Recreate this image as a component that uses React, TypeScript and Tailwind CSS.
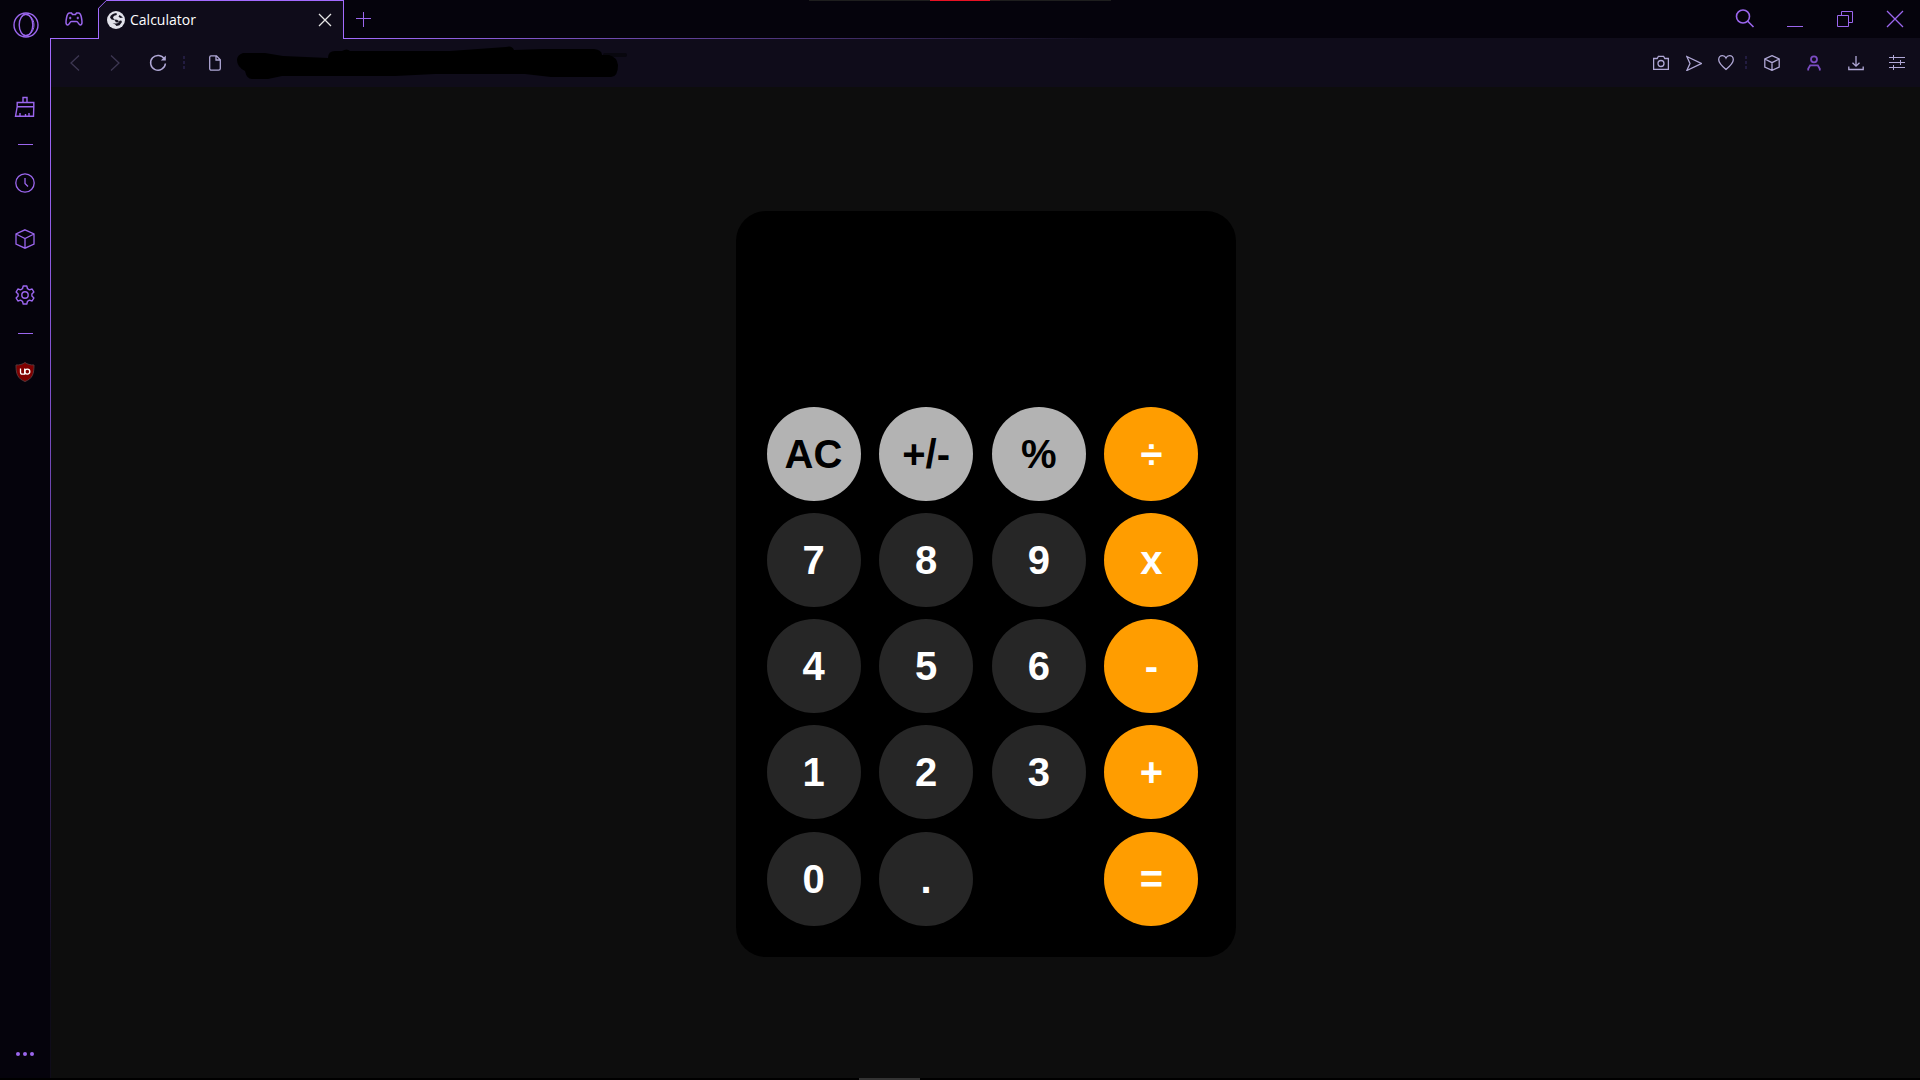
import React from "react";

type IconProps = { children: React.ReactNode; w?: number; h?: number; className?: string; sw?: number };

function Glyph({ children, w = 20, h = 20, className = "", sw = 1.3 }: IconProps) {
  return (
    <svg
      width={w}
      height={h}
      viewBox={`0 0 ${w} ${h}`}
      fill="none"
      stroke="currentColor"
      strokeWidth={sw}
      className={"shrink-0 " + className}
      aria-hidden="true"
    >
      {children}
    </svg>
  );
}

function Cube({ size }: { size: number }) {
  return (
    <svg width={size} height={size} viewBox="0 0 20 20" fill="none" stroke="currentColor" strokeWidth={size < 20 ? 1.6 : 1.3} aria-hidden="true">
      <path d="M10 .8 19 5v10l-9 4.200L1 15V5zM1 5l9 4.600L19 5M10 9.600v9.600" />
    </svg>
  );
}

function IconButton({ label, className, children }: { label: string; className: string; children: React.ReactNode }) {
  return (
    <button type="button" aria-label={label} className={"flex shrink-0 items-center justify-center " + className}>
      {children}
    </button>
  );
}

function Sidebar() {
  return (
    <aside className="flex w-[50px] shrink-0 flex-col items-center bg-[#05030c] text-[#9b66ee]">
      <IconButton label="Opera menu" className="mt-3 h-[26px] w-full pl-px">
        <Glyph w={26} h={26} sw={1.4}>
          <circle cx="13" cy="13" r="12" />
          <ellipse cx="13" cy="13" rx="6.800" ry="10.800" />
          <path d="M10.500 2.800C16 1.500 21 6 21 13s-5 11.500-10.500 10.200" strokeWidth="1" />
        </Glyph>
      </IconButton>
      <IconButton label="Cleaner" className="mt-[58px] h-[22px] w-full">
        <Glyph w={22} h={22} sw={1.4}>
          <path d="M9 6V1.500h4V6M3.200 6.500h16.600v4.200H3.200zM3.200 10.700 1.500 20.300h18l.3-9.600M6 20v-3M11.500 20v-2M15 20v-3" />
        </Glyph>
      </IconButton>
      <hr className="mt-[26px] w-[15px] border-[#9b66ee]" />
      <IconButton label="History" className="mt-7 h-5 w-full">
        <Glyph>
          <circle cx="10" cy="10" r="9.200" />
          <path d="M10 5v5.500l3 3" />
        </Glyph>
      </IconButton>
      <IconButton label="Extensions" className="mt-9 h-5 w-full">
        <Cube size={20} />
      </IconButton>
      <IconButton label="Settings" className="mt-9 h-5 w-full">
        <Glyph sw={1.4}>
          <circle cx="10" cy="10" r="3.200" />
          <path d="M8.200 1h3.600l.7 2.700 1.900 1.100 2.700-.8 1.800 3.100-2 1.900v2l2 1.900-1.800 3.100-2.700-.8-1.900 1.100-.7 2.700H8.200l-.7-2.700-1.900-1.100-2.700.8-1.800-3.100 2-1.900V9l-2-1.900L2.900 4l2.700.8 1.900-1.100z" strokeLinejoin="round" />
        </Glyph>
      </IconButton>
      <hr className="mt-7 w-[15px] border-[#9b66ee]" />
      <IconButton label="uBlock Origin" className="mt-7 h-5 w-full">
        <Glyph>
          <path d="M10 .5c2.500 2 5.500 2.500 9 2.500 0 9-1.500 13.500-9 16.500C2.500 16.500 1 12 1 3c3.500 0 6.500-.5 9-2.500z" fill="#800000" stroke="#55373a" strokeWidth="1" />
          <path d="M5.500 6.500v3.800c0 1.200.6 1.900 1.800 1.900h2.400V6.500" stroke="#fff" strokeWidth="1.300" />
          <circle cx="12.300" cy="9.600" r="2.500" stroke="#fff" strokeWidth="1.300" />
        </Glyph>
      </IconButton>
      <IconButton label="More" className="mt-auto mb-4 h-5 w-full">
        <Glyph>
          <g fill="currentColor" stroke="none">
            <circle cx="3" cy="10" r="2" />
            <circle cx="10" cy="10" r="2" />
            <circle cx="17" cy="10" r="2" />
          </g>
        </Glyph>
      </IconButton>
    </aside>
  );
}

function TabStrip() {
  return (
    <header className="flex h-[39px] shrink-0 bg-[#05030c] text-[#9b66ee]">
      <div className="flex w-12 shrink-0 border-b border-[#a36bff]">
        <IconButton label="GX Corner" className="h-[38px] w-full">
          <Glyph w={18} h={14} sw={1.500}>
            <path d="M4.500 1h2l1 1.500h3L11.500 1h2c1.800 0 2.300 1.500 2.900 4.500.7 3.500 1.200 7.500-1 7.500-1.800 0-2-3.500-4-3.500H6.600c-2 0-2.200 3.500-4 3.500-2.200 0-1.700-4-1-7.500C2.200 2.500 2.700 1 4.500 1z" />
            <path d="M4 6h2.400M5.200 4.800v2.400M11.600 6H14M12.800 4.800v2.400" strokeWidth="1.200" />
          </Glyph>
        </IconButton>
      </div>
      <div className="relative flex w-[246px] shrink-0 items-center border-x border-t border-[#a36bff] bg-[#0f0c1a] px-2">
        <svg width="9" height="9" viewBox="0 0 9 9" className="absolute -top-px -left-px" aria-hidden="true">
          <path d="M0 0h9L0 9z" fill="#05030c" />
          <path d="M.5 9V8.300L8.300.5H9" fill="none" stroke="#a36bff" />
        </svg>
        <svg width="18" height="18" viewBox="0 0 18 18" aria-hidden="true" className="shrink-0">
          <circle cx="9" cy="9" r="9" fill="#e2e2ea" />
          <path d="M9.500 2C6 2.200 3.500 4 3 6.500l1.500 2 3.300.7 1 2 2.600.3.400-1.500-1.800-1.200-3-.4L6 6.200l1.200-1.500 2.600-.6zM12.500 4l-1 1.800 2 1.200 2.500-.4M5.500 12.500l2.500.8 1.500 1.700 3-.8 2.500-3.200-.8-1.600-1.700.4-1.200 2.200-2.300.6z" fill="#15121f" />
        </svg>
        <span className="ml-[5px] font-['Open_Sans','Noto_Sans',sans-serif] text-sm leading-5 text-white">Calculator</span>
        <IconButton label="Close tab" className="ml-auto h-5 w-5 text-[#e6e6e6]">
          <Glyph w={14} h={14} sw={1.300}>
            <path d="m1 1 12 12M13 1 1 13" />
          </Glyph>
        </IconButton>
      </div>
      <div className="flex min-w-0 flex-1 flex-col">
        <div className="flex h-[38px] items-center">
          <IconButton label="New tab" className="ml-[7px] h-8 w-6">
            <Glyph w={16} h={16} sw={1}>
              <path d="M8.500 1v15M1 7.500h15" />
            </Glyph>
          </IconButton>
          <div className="ml-auto flex items-center gap-8 pr-4">
            <IconButton label="Search tabs" className="h-9 w-[18px]">
              <Glyph w={20} h={20} sw={1.600}>
                <circle cx="8" cy="7.500" r="6.500" />
                <path d="m12.500 12 6 6" />
              </Glyph>
            </IconButton>
            <IconButton label="Minimize" className="h-9 w-[18px]">
              <Glyph w={16} h={16} sw={1}>
                <path d="M0 15.500h16" />
              </Glyph>
            </IconButton>
            <IconButton label="Restore" className="h-9 w-[18px]">
              <Glyph w={16} h={16} sw={1}>
                <path d="M.5 4.500h11v11H.5zM4.500 4.500v-4h11v11h-4" />
              </Glyph>
            </IconButton>
            <IconButton label="Close window" className="h-9 w-[18px]">
              <Glyph w={18} h={18} sw={1.300}>
                <path d="m1 1 16 16M17 1 1 17" />
              </Glyph>
            </IconButton>
          </div>
        </div>
        <div className="h-px bg-[linear-gradient(to_right,#a36bff,#0f0c1a_48%)]" />
      </div>
    </header>
  );
}

function Divider() {
  return (
    <Glyph w={2} h={14} className="text-[#221c40]">
      <path d="M1 0v3M1 5v3M1 10v3" strokeWidth="2" />
    </Glyph>
  );
}

function Toolbar() {
  return (
    <nav className="flex h-12 shrink-0 items-center bg-[#0f0c1a] text-[#b0a8d6]">
      <IconButton label="Back" className="ml-3 h-8 w-6 text-[#3d3752]">
        <Glyph w={10} h={16}>
          <path d="M9 .5 1 8l8 7.500" />
        </Glyph>
      </IconButton>
      <IconButton label="Forward" className="ml-4 h-8 w-6 text-[#3d3752]">
        <Glyph w={10} h={16}>
          <path d="m1 .5 8 7.500-8 7.500" />
        </Glyph>
      </IconButton>
      <IconButton label="Reload" className="mr-[13px] ml-[19px] h-8 w-6">
        <Glyph w={18} h={18} sw={1.500}>
          <path d="M15.500 5.200A7.400 7.400 0 1 0 16.400 9.500" />
          <path d="M16.800 1.500v5h-5z" fill="currentColor" stroke="none" />
        </Glyph>
      </IconButton>
      <Divider />
      <IconButton label="Page information" className="ml-[18px] h-8 w-6">
        <Glyph w={12} h={16} sw={1.300}>
          <path d="M2 .8h5.500l3.800 4v8.700c0 1-.7 1.700-1.700 1.700H2.400C1.400 15.200.7 14.500.7 13.500V2.300C.7 1.300 1.200.8 2 .8zM7 .8V5h4" />
        </Glyph>
      </IconButton>
      <svg width="396" height="34" viewBox="0 0 396 34" className="ml-2 shrink-0" aria-hidden="true">
        <path d="M370 9h20" stroke="#08070e" strokeWidth="4" strokeLinecap="round" />
        <path d="M8 7h22l18 3 45 2q0-7 7-7h7q5-3 8 0h100l56-4q6-2 8 3l30-1h50q8 1 8 6h7q8 2 9 10 0 12-7 12h-60l-26-3h-90l-40 2H47l-14 3H18q-6 1-8-8-8-4-8-11 0-5 6-7z" fill="#000" />
      </svg>
      <div className="ml-auto flex items-center pr-3.5">
        <IconButton label="Snapshot" className="h-8 w-4">
          <Glyph w={16} h={16}>
            <path d="M.6 3.500h3.600L5.400 1.300h5.200l1.200 2.200h3.600v10.900H.6z" />
            <circle cx="8" cy="8.500" r="3" />
          </Glyph>
        </IconButton>
        <IconButton label="My Flow" className="ml-[17px] h-8 w-4">
          <Glyph w={16} h={16}>
            <path d="M.8 1.500 15.300 8.500.8 15.500 4 8.500z" />
          </Glyph>
        </IconButton>
        <IconButton label="Bookmark" className="mr-[11px] ml-4 h-8 w-4">
          <Glyph w={16} h={16}>
            <path d="M8 14.500C4.500 11.500.7 8 .7 4.700.7 2.300 2.300.7 4.400.7 6 .7 7.300 1.500 8 3.100 8.700 1.500 10 .7 11.600.7c2.100 0 3.700 1.600 3.700 4C15.300 8 11.500 11.500 8 14.500z" />
          </Glyph>
        </IconButton>
        <Divider />
        <IconButton label="Extensions" className="ml-4 h-8 w-[18px]">
          <Cube size={16} />
        </IconButton>
        <IconButton label="Profile" className="ml-6 h-8 w-[18px] text-[#7b4cc2]">
          <Glyph w={14} h={16} sw={1.800}>
            <circle cx="7" cy="4.300" r="3" />
            <path d="M1.200 15.500v-1.700l2-3.500h7.600l2 3.500v1.700" />
          </Glyph>
        </IconButton>
        <IconButton label="Downloads" className="ml-6 h-8 w-[18px]">
          <Glyph w={16} h={16}>
            <path d="M8 1v10M4.500 7.700 8 11.200l3.500-3.500M.8 11.500v3h14.400v-3" />
          </Glyph>
        </IconButton>
        <IconButton label="Easy setup" className="ml-[23px] h-8 w-[18px]">
          <Glyph w={16} h={16} sw={1}>
            <path d="M0 2.500h16M0 7.500h16M0 12.500h16M4.500 0v5M11.500 5v5M4.500 10v5" />
          </Glyph>
        </IconButton>
      </div>
    </nav>
  );
}

const rows: string[][] = [
  ["AC", "+/-", "%", "÷"],
  ["7", "8", "9", "x"],
  ["4", "5", "6", "-"],
  ["1", "2", "3", "+"],
  ["0", ".", "", "="],
];

function keyColor(row: number, col: number) {
  if (col === 3) return "bg-[#ff9d00] text-white";
  if (row === 0) return "bg-[#b3b3b3] text-black";
  return "bg-[#262626] text-white";
}

function Calculator() {
  return (
    <section aria-label="Calculator" className="w-[500px] rounded-[30px] bg-black pt-[31px] pr-[37px] pb-[31px] pl-[31px]">
      <output className="block h-[165px]" />
      <div className="grid min-h-[519px] grid-cols-[repeat(4,94px)] content-between justify-between">
        {rows.map((row, r) =>
          row.map((key, c) =>
            key === "" ? (
              <span key={`${r}-${c}`} />
            ) : (
              <button
                key={`${r}-${c}`}
                type="button"
                className={
                  "h-[94px] rounded-full font-['Liberation_Sans',Arial,sans-serif] text-[40px] leading-none font-bold " +
                  keyColor(r, c)
                }
              >
                {key}
              </button>
            )
          )
        )}
      </div>
    </section>
  );
}

export default function App() {
  return (
    <div className="relative flex h-screen overflow-hidden bg-[#05030c]">
      <Sidebar />
      <div className="flex min-w-0 flex-1 flex-col">
        <TabStrip />
        <div className="flex min-h-0 flex-1">
          <div className="w-px shrink-0 bg-[linear-gradient(#a36bff,#7d50c8_35%,#0f0c1a_90%)]" />
          <div className="flex min-w-0 flex-1 flex-col">
            <Toolbar />
            <main className="flex min-h-0 flex-1 items-center justify-center bg-[#0d0d0d]">
              <Calculator />
            </main>
          </div>
        </div>
      </div>
      <div className="absolute inset-x-0 top-0 flex justify-center">
        <div className="flex h-px w-[302px] justify-center bg-[#1e1e1e]">
          <div className="w-[60px] bg-[#e81123]" />
        </div>
      </div>
      <div className="absolute inset-x-0 bottom-0 h-0.5 bg-black">
        <div className="ml-[859px] h-0.5 w-[61px] bg-[#333333]" />
      </div>
    </div>
  );
}
